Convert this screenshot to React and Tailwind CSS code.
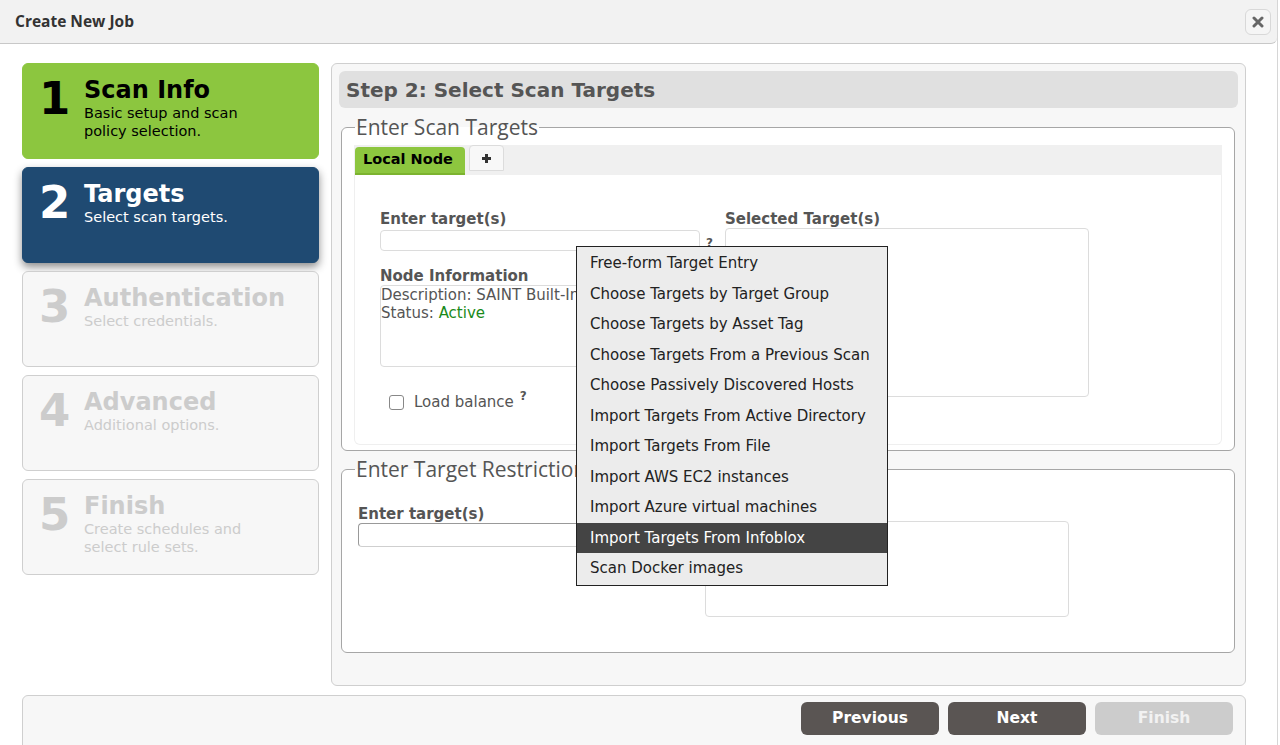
import React from "react";

const steps = [
  { n: "1", title: "Scan Info", desc: "Basic setup and scan policy selection.", state: "done" },
  { n: "2", title: "Targets", desc: "Select scan targets.", state: "active" },
  { n: "3", title: "Authentication", desc: "Select credentials.", state: "todo" },
  { n: "4", title: "Advanced", desc: "Additional options.", state: "todo" },
  { n: "5", title: "Finish", desc: "Create schedules and select rule sets.", state: "todo" },
];

const menuItems = [
  "Free-form Target Entry",
  "Choose Targets by Target Group",
  "Choose Targets by Asset Tag",
  "Choose Targets From a Previous Scan",
  "Choose Passively Discovered Hosts",
  "Import Targets From Active Directory",
  "Import Targets From File",
  "Import AWS EC2 instances",
  "Import Azure virtual machines",
  "Import Targets From Infoblox",
  "Scan Docker images",
];

function StepCard({ step }) {
  const styles = {
    done: "bg-[#8cc63f] border-[#8cc63f] text-black",
    active: "bg-[#1f4a72] border-[#1f4a72] text-white shadow-[0_4px_8px_rgba(0,0,0,0.45)]",
    todo: "bg-[#f7f7f7] border-[#cfcfcf] text-[#cccccc]",
  };
  return (
    <div className={`h-[96px] rounded-md border flex pl-[16px] pt-[12px] ${styles[step.state]}`}>
      <div className="w-[45px] text-[45px] font-bold leading-none">{step.n}</div>
      <div className="flex flex-col">
        <div className="text-[24px] font-bold leading-[28px]">{step.title}</div>
        <div className="text-[14.5px] leading-[18px] w-[175px]">{step.desc}</div>
      </div>
    </div>
  );
}

export default function App() {
  return (
    <div className="w-[1278px] h-[745px] overflow-hidden bg-white border-r border-[#d6d6d6] font-['DejaVu_Sans',Verdana,sans-serif] text-[#333] relative">
      {/* HEADER */}
      <div className="h-[44px] bg-[#f2f2f2] border-b border-[#c8c8c8] rounded-br-md flex items-center justify-between pl-[15px] pr-[6px]">
        <span className="font-['Open_Sans',sans-serif] font-bold text-[15.5px] text-[#333] pt-[1px]">Create New Job</span>
        <button className="w-[26px] h-[26px] rounded-md border border-[#d8d8d8] bg-[#f5f5f5] flex items-center justify-center">
          <svg width="12" height="12" viewBox="0 0 12 12">
            <path d="M2 2 L10 10 M10 2 L2 10" stroke="#666" strokeWidth="3" strokeLinecap="round" />
          </svg>
        </button>
      </div>

      <div className="flex pl-[22px] pt-[19px] gap-[12px]">
        {/* SIDEBAR */}
        <div className="w-[297px] flex flex-col gap-[8px]">
          {steps.map((s) => (
            <StepCard key={s.n} step={s} />
          ))}
        </div>

        {/* MAIN PANEL */}
        <div className="w-[915px] h-[623px] bg-[#f7f7f7] border border-[#cfcfcf] rounded-md p-[7px]">
          <div className="h-[37px] bg-[#e0e0e0] rounded-md flex items-center pl-[7px] text-[20px] font-bold text-[#555]">
            Step 2: Select Scan Targets
          </div>

          {/* FIELDSET 1 */}
          <fieldset className="mt-[7px] ml-[2px] w-[894px] h-[336px] border border-[#a6a6a6] rounded-md bg-white px-[12px] pb-[6px]">
            <legend className="ml-[1px] px-[1px] font-['Open_Sans',sans-serif] text-[21px] leading-[24px] text-[#555]">
              Enter Scan Targets
            </legend>
            <div className="mt-[6px] h-[30px] bg-[#f0f0f0] flex items-end pl-[1px] gap-[4px]">
              <div className="h-[28px] w-[110px] bg-[#8dc63f] rounded-t-[4px] border-b-2 border-[#7cb32f] flex items-center pl-[8px] text-[14.5px] font-bold text-black">
                Local Node
              </div>
              <div className="h-[26px] w-[35px] mb-[4px] bg-[#f8f8f8] border border-[#dcdcdc] rounded-t-[4px] flex items-center justify-center">
                <svg width="11" height="11" viewBox="0 0 11 11">
                  <path d="M5.5 1 V10 M1 5.5 H10" stroke="#333" strokeWidth="3" />
                </svg>
              </div>
            </div>
            <div className="h-[270px] border border-[#efefef] border-t-0 rounded-b-md bg-white pt-[35px] pl-[25px] flex">
              <div className="w-[345px]">
                <div className="text-[15px] font-bold text-[#555] leading-[18px]">Enter target(s)</div>
                <div className="flex items-center">
                  <div className="w-[320px] h-[21px] border border-[#dcdcdc] rounded-[4px] bg-white shrink-0" />
                  <span className="ml-[6px] mt-[6px] text-[12px] font-bold text-[#555]">?</span>
                </div>
                <div className="mt-[15px] text-[15px] font-bold text-[#555] leading-[18px]">Node Information</div>
                <div className="w-[320px] h-[82px] border border-[#dcdcdc] rounded-[4px] text-[15px] leading-[18px] text-[#555]">
                  <div>Description: SAINT Built-In</div>
                  <div>
                    Status: <span className="text-[#1a8a1a]">Active</span>
                  </div>
                </div>
                <div className="mt-[24px] ml-[9px] flex items-center">
                  <div className="w-[15px] h-[15px] border border-[#888] rounded-[3px] bg-white" />
                  <span className="ml-[10px] text-[15px] text-[#555]">Load balance</span>
                  <span className="ml-[6px] -mt-[12px] text-[12px] font-bold text-[#555]">?</span>
                </div>
              </div>
              <div>
                <div className="text-[15px] font-bold text-[#555] leading-[18px]">Selected Target(s)</div>
                <div className="w-[364px] h-[169px] border border-[#dcdcdc] rounded-[4px] bg-white" />
              </div>
            </div>
          </fieldset>

          {/* FIELDSET 2 */}
          <fieldset className="mt-[6px] ml-[2px] w-[894px] h-[196px] border border-[#a6a6a6] rounded-md bg-white pl-[16px]">
            <legend className="-ml-[3px] px-[1px] font-['Open_Sans',sans-serif] text-[21px] leading-[24px] text-[#555]">
              Enter Target Restrictions
            </legend>
            <div className="flex pt-[24px]">
              <div className="w-[347px]">
                <div className="text-[15px] font-bold text-[#555] leading-[18px]">Enter target(s)</div>
                <div className="w-[320px] h-[24px] border border-[#cfcfcf] border-t-[#999] border-l-[#999] rounded-[4px] bg-white" />
              </div>
              <div className="pt-[16px]">
                <div className="w-[364px] h-[96px] border border-[#dcdcdc] rounded-[4px] bg-white" />
              </div>
            </div>
          </fieldset>
        </div>
      </div>

      {/* FOOTER */}
      <div className="mt-[9px] ml-[22px] w-[1224px] h-[60px] bg-[#f7f7f7] border border-[#cfcfcf] rounded-md flex justify-end gap-[9px] pt-[6px] pr-[12px]">
        <button className="w-[138px] h-[33px] rounded-md bg-[#5a5553] text-white font-bold text-[15.5px]">Previous</button>
        <button className="w-[138px] h-[33px] rounded-md bg-[#5a5553] text-white font-bold text-[15.5px]">Next</button>
        <button className="w-[138px] h-[33px] rounded-md bg-[#cccccc] text-[#f2f2f2] font-bold text-[15.5px]">Finish</button>
      </div>

      {/* DROPDOWN MENU */}
      <div className="absolute left-[576px] top-[246px] w-[312px] bg-[#ececec] border border-[#222] py-[1px]">
        {menuItems.map((item, i) => (
          <div
            key={item}
            className={`h-[30.5px] flex items-center pl-[13px] text-[15px] ${
              i === 9 ? "bg-[#444] text-white" : "text-[#222]"
            }`}
          >
            {item}
          </div>
        ))}
      </div>
    </div>
  );
}
